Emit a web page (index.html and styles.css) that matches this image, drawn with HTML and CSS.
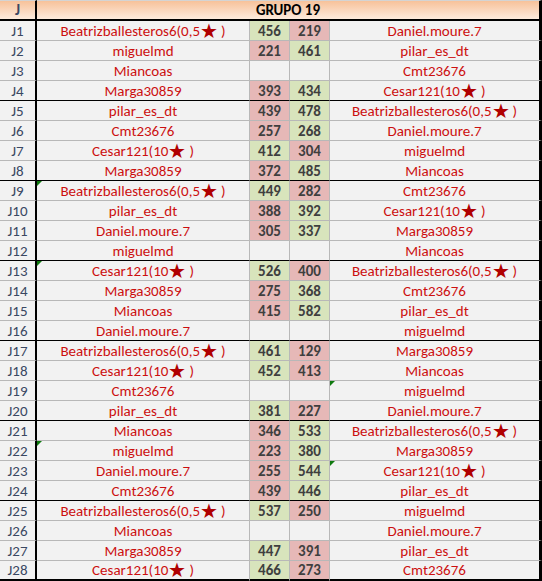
FILE: index.html
```html
<!DOCTYPE html>
<html>
<head>
<meta charset="utf-8">
<link rel="stylesheet" href="styles.css">
</head>
<body>
<div class="sheet">
  <div class="row head">
    <div class="c j">J</div>
    <div class="c title">GRUPO 19</div>
  </div>

  <div class="row"><div class="c j">J1</div><div class="c n">Beatrizballesteros6(0,5<span class="star">★</span>)</div><div class="c s g">456</div><div class="c s r">219</div><div class="c n last">Daniel.moure.7</div></div>
  <div class="row"><div class="c j">J2</div><div class="c n">miguelmd</div><div class="c s r">221</div><div class="c s g">461</div><div class="c n last">pilar_es_dt</div></div>
  <div class="row"><div class="c j">J3</div><div class="c n">Miancoas</div><div class="c s"></div><div class="c s"></div><div class="c n last">Cmt23676</div></div>
  <div class="row grp"><div class="c j">J4</div><div class="c n">Marga30859</div><div class="c s r">393</div><div class="c s g">434</div><div class="c n last">Cesar121(10<span class="star">★</span>)</div></div>

  <div class="row"><div class="c j">J5</div><div class="c n">pilar_es_dt</div><div class="c s r">439</div><div class="c s g">478</div><div class="c n last">Beatrizballesteros6(0,5<span class="star">★</span>)</div></div>
  <div class="row"><div class="c j">J6</div><div class="c n">Cmt23676</div><div class="c s r">257</div><div class="c s g">268</div><div class="c n last">Daniel.moure.7</div></div>
  <div class="row"><div class="c j">J7</div><div class="c n">Cesar121(10<span class="star">★</span>)</div><div class="c s g">412</div><div class="c s r">304</div><div class="c n last">miguelmd</div></div>
  <div class="row grp"><div class="c j">J8</div><div class="c n">Marga30859</div><div class="c s r">372</div><div class="c s g">485</div><div class="c n last">Miancoas</div></div>

  <div class="row"><div class="c j">J9</div><div class="c n tri">Beatrizballesteros6(0,5<span class="star">★</span>)</div><div class="c s g">449</div><div class="c s r">282</div><div class="c n last">Cmt23676</div></div>
  <div class="row"><div class="c j">J10</div><div class="c n">pilar_es_dt</div><div class="c s r">388</div><div class="c s g">392</div><div class="c n last">Cesar121(10<span class="star">★</span>)</div></div>
  <div class="row"><div class="c j">J11</div><div class="c n">Daniel.moure.7</div><div class="c s r">305</div><div class="c s g">337</div><div class="c n last">Marga30859</div></div>
  <div class="row grp"><div class="c j">J12</div><div class="c n">miguelmd</div><div class="c s"></div><div class="c s"></div><div class="c n last">Miancoas</div></div>

  <div class="row"><div class="c j">J13</div><div class="c n tri">Cesar121(10<span class="star">★</span>)</div><div class="c s g">526</div><div class="c s r">400</div><div class="c n last">Beatrizballesteros6(0,5<span class="star">★</span>)</div></div>
  <div class="row"><div class="c j">J14</div><div class="c n">Marga30859</div><div class="c s r">275</div><div class="c s g">368</div><div class="c n last">Cmt23676</div></div>
  <div class="row"><div class="c j">J15</div><div class="c n">Miancoas</div><div class="c s r">415</div><div class="c s g">582</div><div class="c n last">pilar_es_dt</div></div>
  <div class="row grp"><div class="c j">J16</div><div class="c n">Daniel.moure.7</div><div class="c s"></div><div class="c s"></div><div class="c n last">miguelmd</div></div>

  <div class="row"><div class="c j">J17</div><div class="c n">Beatrizballesteros6(0,5<span class="star">★</span>)</div><div class="c s g">461</div><div class="c s r">129</div><div class="c n last">Marga30859</div></div>
  <div class="row"><div class="c j">J18</div><div class="c n">Cesar121(10<span class="star">★</span>)</div><div class="c s g">452</div><div class="c s r">413</div><div class="c n last">Miancoas</div></div>
  <div class="row"><div class="c j">J19</div><div class="c n">Cmt23676</div><div class="c s"></div><div class="c s"></div><div class="c n last tri">miguelmd</div></div>
  <div class="row grp"><div class="c j">J20</div><div class="c n">pilar_es_dt</div><div class="c s g">381</div><div class="c s r">227</div><div class="c n last">Daniel.moure.7</div></div>

  <div class="row"><div class="c j">J21</div><div class="c n">Miancoas</div><div class="c s r">346</div><div class="c s g">533</div><div class="c n last">Beatrizballesteros6(0,5<span class="star">★</span>)</div></div>
  <div class="row"><div class="c j">J22</div><div class="c n tri">miguelmd</div><div class="c s r">223</div><div class="c s g">380</div><div class="c n last">Marga30859</div></div>
  <div class="row"><div class="c j">J23</div><div class="c n">Daniel.moure.7</div><div class="c s r">255</div><div class="c s g">544</div><div class="c n last tri">Cesar121(10<span class="star">★</span>)</div></div>
  <div class="row grp"><div class="c j">J24</div><div class="c n">Cmt23676</div><div class="c s r">439</div><div class="c s g">446</div><div class="c n last">pilar_es_dt</div></div>

  <div class="row"><div class="c j">J25</div><div class="c n">Beatrizballesteros6(0,5<span class="star">★</span>)</div><div class="c s g">537</div><div class="c s r">250</div><div class="c n last">miguelmd</div></div>
  <div class="row"><div class="c j">J26</div><div class="c n">Miancoas</div><div class="c s"></div><div class="c s"></div><div class="c n last">Daniel.moure.7</div></div>
  <div class="row"><div class="c j">J27</div><div class="c n">Marga30859</div><div class="c s g">447</div><div class="c s r">391</div><div class="c n last">pilar_es_dt</div></div>
  <div class="row end"><div class="c j">J28</div><div class="c n">Cesar121(10<span class="star">★</span>)</div><div class="c s g">466</div><div class="c s r">273</div><div class="c n last">Cmt23676</div></div>
</div>
</body>
</html>
```
FILE: styles.css
```css
html, body {
  margin: 0;
  padding: 0;
  background: #ffffff;
}

.sheet {
  width: 542px;
  font-family: Calibri, Carlito, Lato, "Open Sans", sans-serif;
  font-size: 15px;
}

.row {
  display: grid;
  grid-template-columns: 37px 213px 40px 40px 212px;
  height: 20px;
}

.row.head {
  grid-template-columns: 37px 505px;
  height: 21px;
}

.c {
  box-sizing: border-box;
  display: flex;
  align-items: center;
  justify-content: center;
  background: #f2f2f2;
  border-right: 1px solid #b8b8b8;
  border-bottom: 1px solid #b8b8b8;
  white-space: nowrap;
  position: relative;
  line-height: 18px;
}

.head .c {
  background: linear-gradient(to bottom, #f7c29a 0%, #fad8bf 55%, #fdebdd 100%);
  border-top: 1px solid #d4d4d4;
  border-bottom: 2px solid #000;
  font-weight: bold;
  color: #000;
  font-size: 15px;
}

.head .title {
  border-right: 3px solid #000;
}

.c.j {
  border-right: 2px solid #000;
  color: #3a4862;
}

.c.n {
  color: #cc0f0f;
}

.c.last {
  border-right: 3px solid #000;
}

.c.s {
  font-weight: bold;
  color: #3f3f3f;
}

.c.g {
  background: #d8e4bc;
}

.c.r {
  background: #e6b8b7;
}

.star {
  color: #b00000;
  font-size: 1.3em;
  line-height: 16px;
  margin: 0 3px 0 0;
}

.grp .c {
  border-bottom-color: #000;
}

.end .c {
  border-bottom: 3px solid #000;
}

.tri::before {
  content: "";
  position: absolute;
  left: 0;
  top: 0;
  width: 0;
  height: 0;
  border-top: 5px solid #0f7a0f;
  border-right: 5px solid transparent;
}
```
